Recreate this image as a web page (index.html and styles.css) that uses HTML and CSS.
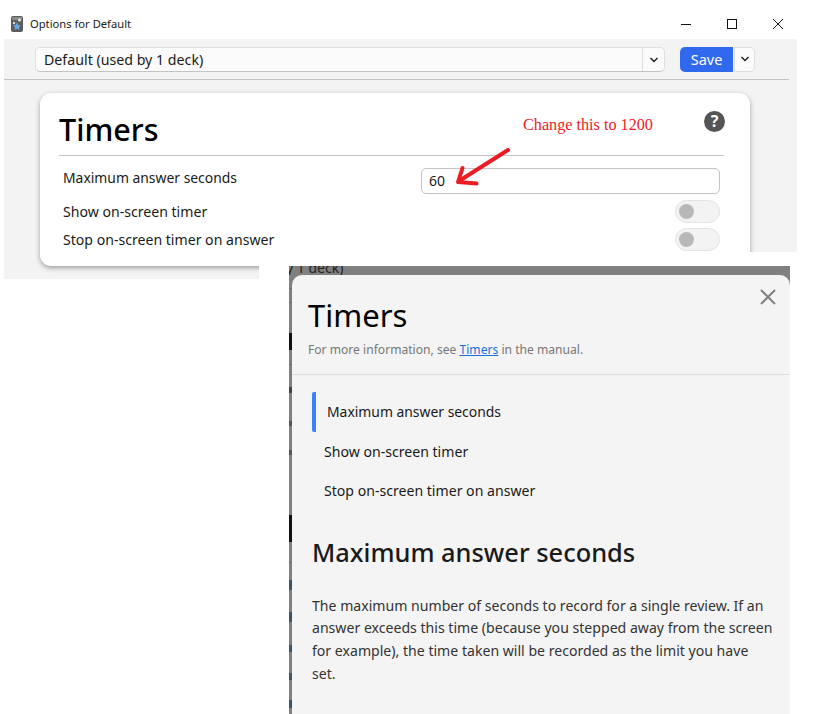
FILE: index.html
```html
<!DOCTYPE html>
<html lang="en">
<head>
    <meta charset="utf-8">
    <title>Options for Default</title>
    <link rel="stylesheet" href="styles.css">
</head>
<body>
    <div id="page">
        <header class="titlebar">
            <svg class="titlebar__icon" width="12" height="16" viewBox="0 0 12 16">
                <rect x="0" y="0" width="12" height="16" rx="2" fill="#5c5c5c"/>
                <rect x="1" y="1" width="10" height="3" rx="1" fill="#8a8a8a"/>
                <circle cx="8.500" cy="4" r="1.500" fill="#e3ebf5"/>
                <circle cx="3" cy="7" r="1.200" fill="#d5dde7"/>
                <path d="M6 6.500l1.300 2.500 2.700.4-2 1.900.5 2.700L6 12.700l-2.500 1.300.5-2.700-2-1.900 2.700-.4z" fill="#6aa5e6"/>
            </svg>
            <span class="titlebar__text">Options for Default</span>
            <div class="titlebar__controls">
                <svg width="12" height="12" viewBox="0 0 12 12"><path d="M1 6.500h10" stroke="#111" fill="none"/></svg>
                <svg width="12" height="12" viewBox="0 0 12 12"><rect x="1.500" y="1.500" width="9" height="9" stroke="#111" fill="none"/></svg>
                <svg width="12" height="12" viewBox="0 0 12 12"><path d="M1 1l10 10M11 1L1 11" stroke="#111" fill="none"/></svg>
            </div>
        </header>

        <main class="deck-window">
            <div class="toolbar">
                <div class="preset">
                    <span class="preset__name">Default (used by 1 deck)</span>
                    <span class="preset__arrow">
                        <svg width="10" height="6" viewBox="0 0 10 6"><path d="M1.500 1l3.500 3.500L8.500 1" stroke="#222" stroke-width="1.500" fill="none"/></svg>
                    </span>
                </div>
                <button class="save">Save</button>
                <span class="save-more">
                    <svg class="save-more__icon" width="10" height="6" viewBox="0 0 10 6"><path d="M1.500 1l3.500 3.500L8.500 1" stroke="#222" stroke-width="1.500" fill="none"/></svg>
                </span>
            </div>
            <hr class="toolbar__rule">

            <section class="card">
                <div class="card__head">
                    <h1 class="card__title">Timers</h1>
                    <span class="card__note">Change this to 1200</span>
                    <span class="card__help">?</span>
                </div>
                <div class="row row--input">
                    <span class="row__label">Maximum answer seconds</span>
                    <span class="row__input">60</span>
                </div>
                <div class="row">
                    <span class="row__label">Show on-screen timer</span>
                    <span class="toggle"></span>
                </div>
                <div class="row">
                    <span class="row__label">Stop on-screen timer on answer</span>
                    <span class="toggle"></span>
                </div>
            </section>
        </main>

        <div class="cover"></div>

        <svg class="arrow" width="64" height="46" viewBox="0 0 64 46">
            <path d="M56 4L7 35" stroke="#ed1c24" stroke-width="4" stroke-linecap="round" fill="none"/>
            <path d="M10.500 22L6 36l18.500 1.500" stroke="#ed1c24" stroke-width="4" stroke-linecap="round" stroke-linejoin="round" fill="none"/>
        </svg>

        <aside class="help">
            <div class="help__behind">
                <span class="help__behind-title">y 1 deck)</span>
            </div>
            <div class="dialog">
                <div class="dialog__head">
                    <h2 class="dialog__title">Timers</h2>
                    <p class="dialog__sub">For more information, see <a href="#">Timers</a> in the manual.</p>
                    <svg class="dialog__close" width="16" height="16" viewBox="0 0 16 16"><path d="M1 1l14 14M15 1L1 15" stroke="#808080" stroke-width="2" fill="none"/></svg>
                </div>
                <nav class="topics">
                    <div class="topics__item topics__item--active">Maximum answer seconds</div>
                    <div class="topics__item">Show on-screen timer</div>
                    <div class="topics__item">Stop on-screen timer on answer</div>
                </nav>
                <article class="entry">
                    <h3 class="entry__title">Maximum answer seconds</h3>
                    <p class="entry__text">The maximum number of seconds to record for a single review. If an answer exceeds this time (because you stepped away from the screen for example), the time taken will be recorded as the limit you have set.</p>
                </article>
            </div>
        </aside>
    </div>
</body>
</html>
```
FILE: styles.css
```css
:root {
    --panel: #f3f3f3;
    --rule: #c4c4c4;
    --soft-border: #dfdfdf;
    --blue: #3069ee;
    --ink: #1a1a1a;
}

html, body {
    margin: 0;
    padding: 0;
    background: #fff;
    font-family: "Noto Sans", "Open Sans", sans-serif;
    color: var(--ink);
}

#page {
    position: relative;
    width: 814px;
    height: 714px;
    overflow: hidden;
}

/* Title bar */
.titlebar {
    display: flex;
    align-items: center;
    height: 39px;
    padding: 8px 30px 0 11px;
    box-sizing: border-box;
}

.titlebar__text {
    margin-left: 7px;
    font-size: 11.200px;
}

.titlebar__controls {
    display: flex;
    gap: 34px;
    margin-left: auto;
}

/* Deck options window */
.deck-window {
    width: 793px;
    height: 240px;
    margin-left: 4px;
    background: var(--panel);
    overflow: hidden;
}

.toolbar {
    display: flex;
    align-items: center;
    height: 25px;
    margin: 8px 42px 0 31px;
}

.preset {
    display: flex;
    flex: 1;
    height: 100%;
    box-sizing: border-box;
    background: #fbfbfb;
    border: 1px solid var(--soft-border);
    border-bottom-color: var(--rule);
    border-radius: 5px;
}

.preset__name {
    flex: 1;
    padding-left: 8px;
    font-size: 14.200px;
    line-height: 23px;
}

.preset__arrow {
    display: flex;
    align-items: center;
    justify-content: center;
    width: 21px;
    border-left: 1px solid var(--soft-border);
}

.save {
    width: 53px;
    height: 100%;
    margin-left: 15px;
    padding: 0 0 2px;
    border: 0;
    border-radius: 5px 0 0 5px;
    background: var(--blue);
    color: #fff;
    font: 14.500px "Noto Sans", sans-serif;
}

.save-more {
    display: flex;
    align-items: center;
    justify-content: center;
    width: 21px;
    height: 100%;
    margin-left: 1px;
    box-sizing: border-box;
    background: #fbfbfb;
    border: 1px solid var(--soft-border);
    border-radius: 0 5px 5px 0;
}

.save-more__icon {
    margin-bottom: 2px;
}

.toolbar__rule {
    height: 1px;
    margin: 7px 8px 0 0;
    border: 0;
    background: var(--rule);
}

.card {
    width: 710px;
    height: 173px;
    margin: 13px 0 0 36px;
    padding: 0 26px 0 19px;
    box-sizing: border-box;
    background: #fff;
    border-radius: 11px;
    box-shadow: 0 2px 5px rgba(0, 0, 0, 0.35);
}

.card__head {
    position: relative;
    height: 62px;
    border-bottom: 1px solid var(--rule);
}

.card__title {
    margin: 0;
    padding-top: 14px;
    font-size: 30.500px;
    font-weight: 500;
    line-height: 44px;
    color: #000;
}

.card__note {
    position: absolute;
    left: 464px;
    top: 23px;
    font-family: "Liberation Serif", serif;
    font-size: 16.200px;
    color: #ed1c24;
}

.card__help {
    position: absolute;
    right: -1px;
    top: 18px;
    width: 21px;
    height: 21px;
    border-radius: 50%;
    background: #555;
    color: #fff;
    font-size: 16px;
    font-weight: 700;
    line-height: 21px;
    text-align: center;
}

.row {
    display: flex;
    align-items: center;
    justify-content: space-between;
    height: 28px;
    padding: 0 4px;
}

.row--input {
    height: 26px;
    margin: 12px 0 3px;
}

.row--input .row__label {
    margin-bottom: 8px;
    font-size: 13.900px;
}

.row__label {
    font-size: 14.100px;
}

.row__input {
    width: 299px;
    height: 26px;
    padding-left: 7px;
    box-sizing: border-box;
    border: 1px solid var(--rule);
    border-radius: 5px;
    font-size: 14px;
    line-height: 24px;
}

.toggle {
    position: relative;
    width: 45px;
    height: 23px;
    box-sizing: border-box;
    background: var(--panel);
    border: 1px solid #e3e3e3;
    border-radius: 12px;
}

.toggle::after {
    content: "";
    position: absolute;
    left: 3px;
    top: 3px;
    width: 15px;
    height: 15px;
    border-radius: 50%;
    background: #b8b8b8;
}

/* Covers the lower right of the deck window where the two captures were pasted */
.cover {
    position: absolute;
    left: 259px;
    top: 252px;
    width: 555px;
    height: 30px;
    background: #fff;
}

.arrow {
    position: absolute;
    left: 452px;
    top: 146px;
}

/* Help dialog, the page dimmed behind it shows along the left edge */
.help {
    position: absolute;
    left: 289px;
    top: 266px;
    width: 501px;
    height: 448px;
    background:
        linear-gradient(to bottom,
            transparent 22px, #6c6c6c 22px, #6c6c6c 23px,
            transparent 23px, transparent 36px, #6c6c6c 36px, #6c6c6c 37px,
            transparent 37px, transparent 67px, #111 67px, #111 84px,
            transparent 84px, transparent 98px, #6c6c6c 98px, #6c6c6c 99px,
            transparent 99px, transparent 121px, #444 121px, #444 127px,
            transparent 127px, transparent 155px, #555 155px, #555 160px,
            transparent 160px, transparent 184px, #555 184px, #555 189px,
            transparent 189px, transparent 249px, #111 249px, #111 276px,
            transparent 276px, transparent 296px, #6c6c6c 296px, #6c6c6c 297px,
            transparent 297px, transparent 314px, #3f5566 314px, #3f5566 324px,
            transparent 324px, transparent 346px, #3f5566 346px, #3f5566 356px,
            transparent 356px, transparent 379px, #3f5566 379px, #3f5566 386px,
            transparent 386px, transparent 407px, #3f5566 407px, #3f5566 414px,
            transparent 414px, transparent 434px, #3f5566 434px, #3f5566 442px,
            transparent 442px) left top / 3px 100% no-repeat,
        #808080;
    overflow: hidden;
}

.help__behind {
    height: 9px;
    overflow: hidden;
}

.help__behind-title {
    display: block;
    margin: -7px 0 0 -3px;
    font-size: 14px;
    line-height: 18px;
    color: #222;
}

.dialog {
    height: 439px;
    margin-left: 3px;
    background: #f4f4f4;
    border-radius: 10px 10px 0 0;
}

.dialog__head {
    position: relative;
    height: 100px;
    padding-left: 16px;
    box-sizing: border-box;
    border-bottom: 1px solid #dcdcdc;
}

.dialog__title {
    margin: 0;
    padding-top: 18px;
    font-size: 31px;
    font-weight: 400;
    line-height: 44px;
    color: #000;
}

.dialog__sub {
    margin: 4px 0 0;
    font-size: 12.100px;
    color: #777;
}

.dialog__sub a {
    color: #1a6fe0;
}

.dialog__close {
    position: absolute;
    right: 14px;
    top: 14px;
}

.topics {
    padding: 17px 0 0 20px;
}

.topics__item {
    padding-left: 12px;
    font-size: 14.100px;
    line-height: 39.500px;
}

.topics__item--active {
    padding-left: 11px;
    font-size: 13.900px;
    border-left: 4px solid #3b82f6;
    border-radius: 2px;
}

.entry {
    padding: 23px 17px 0 20px;
}

.entry__title {
    margin: 0;
    font-size: 25.400px;
    font-weight: 500;
    line-height: 36px;
}

.entry__text {
    margin: 25px 0 0;
    font-size: 14.100px;
    line-height: 22.700px;
    color: #333;
}
```
